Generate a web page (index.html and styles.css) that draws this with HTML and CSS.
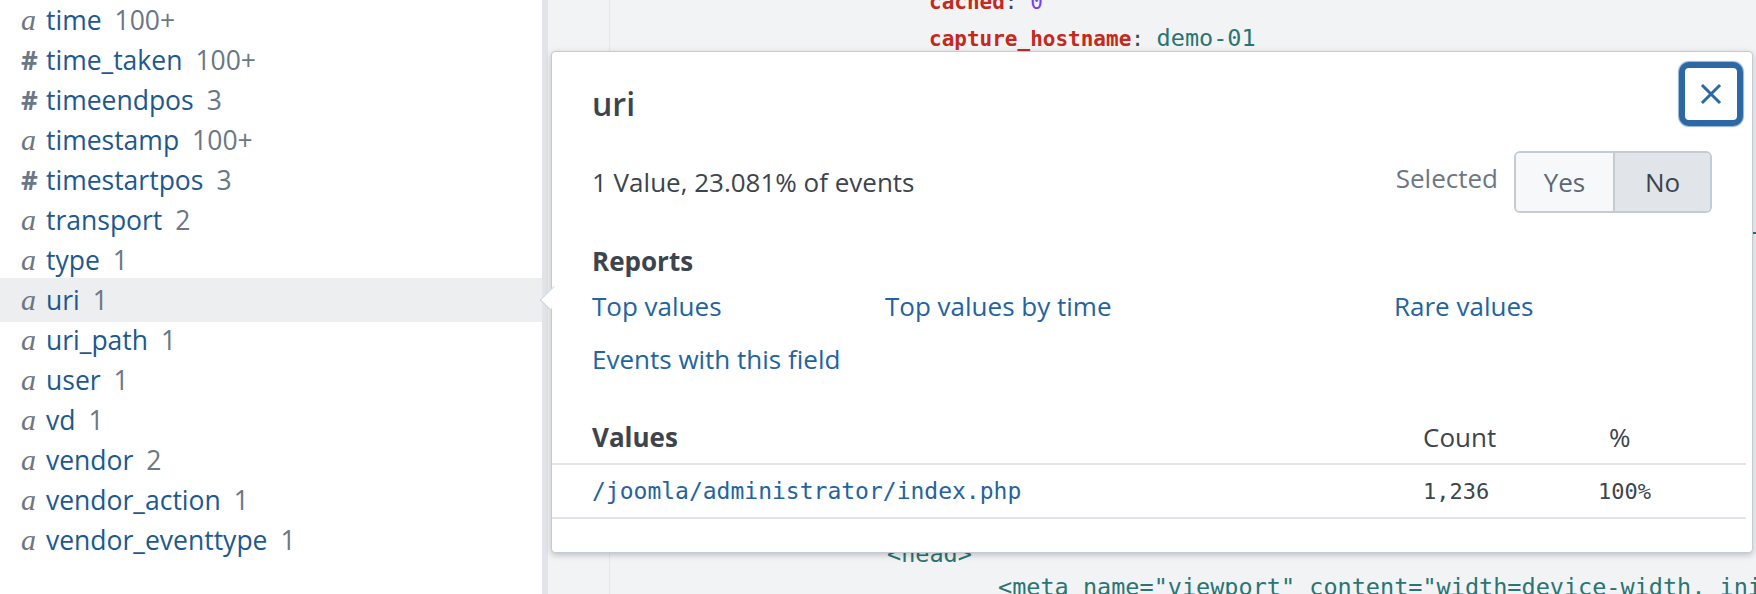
FILE: index.html
```html
<!DOCTYPE html>
<html>
<head>
<meta charset="utf-8">
<link rel="stylesheet" href="styles.css">
</head>
<body>
<div class="page">
  <aside class="fields">
    <div class="field"><span class="ic ic-a">a</span><span class="name">time</span><span class="cnt">100+</span></div>
    <div class="field"><span class="ic ic-n">#</span><span class="name">time_taken</span><span class="cnt">100+</span></div>
    <div class="field"><span class="ic ic-n">#</span><span class="name">timeendpos</span><span class="cnt">3</span></div>
    <div class="field"><span class="ic ic-a">a</span><span class="name">timestamp</span><span class="cnt">100+</span></div>
    <div class="field"><span class="ic ic-n">#</span><span class="name">timestartpos</span><span class="cnt">3</span></div>
    <div class="field"><span class="ic ic-a">a</span><span class="name">transport</span><span class="cnt">2</span></div>
    <div class="field"><span class="ic ic-a">a</span><span class="name">type</span><span class="cnt">1</span></div>
    <div class="field active"><span class="ic ic-a">a</span><span class="name">uri</span><span class="cnt">1</span></div>
    <div class="field"><span class="ic ic-a">a</span><span class="name">uri_path</span><span class="cnt">1</span></div>
    <div class="field"><span class="ic ic-a">a</span><span class="name">user</span><span class="cnt">1</span></div>
    <div class="field"><span class="ic ic-a">a</span><span class="name">vd</span><span class="cnt">1</span></div>
    <div class="field"><span class="ic ic-a">a</span><span class="name">vendor</span><span class="cnt">2</span></div>
    <div class="field"><span class="ic ic-a">a</span><span class="name">vendor_action</span><span class="cnt">1</span></div>
    <div class="field"><span class="ic ic-a">a</span><span class="name">vendor_eventtype</span><span class="cnt">1</span></div>
  </aside>
  <div class="divider"></div>
  <main class="events">
    <div class="gutter"></div>
    <div class="code">
      <div class="line ind1"><span class="k">cached</span><span class="p">: </span><span class="num">0</span></div>
      <div class="line ind1"><span class="k">capture_hostname</span><span class="p">: </span><span class="v">demo-01</span></div>
      <div class="hidden-lines">
        <div class="line ind1"><span class="k">dest_content</span><span class="p">: </span><span class="v">&lt;!DOCTYPE html PUBLIC "-//W3C//DTD XHTML 1.0 Transitional//EN"&gt;</span></div>
        <div class="line ind0"><span class="v">&lt;html&gt;</span></div>
      </div>
      <div class="line ind0 lower"><span class="v">&lt;head&gt;</span></div>
      <div class="line ind2 lower"><span class="v">&lt;meta name="viewport" content="width=device-width, initial-scale=1.0" /&gt;</span></div>
    </div>
  </main>

  <section class="popover">
    <div class="arrow"></div>
    <header class="pop-head">
      <h2 class="pop-title">uri</h2>
      <button class="close" aria-label="Close">
        <svg viewBox="0 0 24 24" width="24" height="24"><path d="M4 4 L20 20 M20 4 L4 20" stroke="#2b68a4" stroke-width="3" stroke-linecap="square" fill="none"/></svg>
      </button>
    </header>
    <div class="summary">
      <span class="stat">1 Value, 23.081% of events</span>
      <div class="selected">
        <span class="sel-label">Selected</span>
        <div class="toggle"><span class="opt">Yes</span><span class="opt on">No</span></div>
      </div>
    </div>
    <h3 class="sub">Reports</h3>
    <div class="reports">
      <a class="link">Top values</a>
      <a class="link">Top values by time</a>
      <a class="link">Rare values</a>
      <a class="link">Events with this field</a>
    </div>
    <div class="values">
      <div class="vrow vhead"><span class="c1">Values</span><span class="c2">Count</span><span class="c3 pct">%</span></div>
      <div class="vrow vbody"><span class="c1 mono link">/joomla/administrator/index.php</span><span class="c2 mono">1,236</span><span class="c3 mono">100%</span></div>
    </div>
  </section>
</div>
</body>
</html>
```
FILE: styles.css
```css
* { box-sizing: border-box; }
html, body { margin: 0; padding: 0; }
body {
  width: 1756px;
  height: 594px;
  overflow: hidden;
  font-family: "Open Sans", "Lato", sans-serif;
  color: #3c444d;
  background: #fff;
}
.page {
  position: relative;
  display: flex;
  width: 1756px;
  height: 594px;
  overflow: hidden;
}
.fields {
  width: 542px;
  flex: none;
  background: #fff;
}
.field {
  height: 40px;
  display: flex;
  align-items: center;
  padding-left: 21px;
  font-size: 26.5px;
  white-space: nowrap;
}
.field.active {
  background: #eceef0;
  height: 44px;
  margin: -2px 0;
}
.ic {
  width: 25px;
  flex: none;
  color: #6b7785;
}
.ic-a {
  font-family: "Liberation Serif", "DejaVu Serif", serif;
  font-style: italic;
  font-size: 30px;
}
.ic-n {
  font-size: 26px;
  font-weight: 700;
}
.name { color: #1d5890; }
.cnt { color: #6b7785; margin-left: 13px; }
.divider {
  width: 6px;
  flex: none;
  background: #e1e4e8;
}
.events {
  flex: 1;
  display: flex;
  background: #f2f3f5;
  overflow: hidden;
}
.gutter {
  width: 62px;
  flex: none;
  border-right: 1px solid #e3e6ea;
}
.code {
  flex: 1;
  font-family: "DejaVu Sans Mono", monospace;
  font-size: 21px;
  white-space: nowrap;
  margin-top: -16px;
  overflow: hidden;
}
.line { height: 36px; line-height: 36px; }
.lower { height: 33px; line-height: 33px; }
.ind0 { padding-left: 277px; }
.ind1 { padding-left: 319px; }
.ind2 { padding-left: 388px; }
.hidden-lines {
  height: 482px;
  padding-top: 167px;
}
.k { color: #c4291c; font-weight: 700; }
.p { color: #3c444d; }
.num { color: #7b3ff2; }
.v { color: #2a7574; font-size: 23.5px; }

.popover {
  position: absolute;
  left: 551px;
  top: 51px;
  width: 1202px;
  height: 502px;
  background: #fff;
  border: 1px solid #c3cbd4;
  border-radius: 4px;
  box-shadow: 0 2px 6px rgba(0, 0, 0, 0.22);
  padding: 0 0 0 40px;
}
.arrow {
  position: absolute;
  left: -10px;
  top: 236px;
  width: 20px;
  height: 20px;
  background: #fff;
  border-left: 1px solid #c3cbd4;
  border-bottom: 1px solid #c3cbd4;
  transform: rotate(45deg) scaleX(0.7);
}
.pop-head {
  display: flex;
  justify-content: space-between;
  align-items: flex-start;
  padding-right: 9px;
  padding-top: 10px;
  height: 98px;
}
.pop-title {
  margin: 20px 0 0 0;
  font-size: 32px;
  font-weight: 600;
  color: #3c444d;
  line-height: 44px;
}
.close {
  width: 64px;
  height: 64px;
  border: 6px solid #2b68a4;
  border-radius: 10px;
  background: #fff;
  display: flex;
  align-items: center;
  justify-content: center;
  padding: 0;
  box-shadow: 0 0 1px 1px rgba(43, 104, 164, 0.5);
}
.summary {
  display: flex;
  justify-content: space-between;
  align-items: center;
  padding-right: 40px;
  height: 64px;
  font-size: 26px;
}
.selected { display: flex; align-items: center; gap: 16px; }
.sel-label { color: #6b7785; margin-top: -8px; }
.toggle {
  display: flex;
  border: 2px solid #c3cbd4;
  border-radius: 6px;
  overflow: hidden;
  height: 62px;
}
.opt {
  width: 97px;
  display: flex;
  align-items: center;
  justify-content: center;
  background: #f7f8fa;
  color: #5c6773;
}
.opt.on {
  background: #e1e4e8;
  color: #3c444d;
  border-left: 2px solid #c3cbd4;
}
.sub {
  margin: 0;
  padding-top: 29px;
  font-size: 26px;
  font-weight: 700;
  line-height: 36px;
}
.reports {
  display: grid;
  grid-template-columns: 293px 509px auto;
  grid-auto-rows: 53px;
  align-items: center;
  font-size: 26px;
}
.link { color: #23639f; }
.values {
  margin-top: 26px;
  margin-left: -40px;
  margin-right: 6px;
}
.vrow {
  display: grid;
  grid-template-columns: 831px 175px auto;
  align-items: center;
  padding-left: 40px;
  border-bottom: 2px solid #e1e4e8;
}
.vhead {
  height: 54px;
  font-size: 26px;
}
.vhead .c1 { font-weight: 700; }
.vhead .pct { padding-left: 11px; }
.vbody {
  height: 54px;
  font-size: 22px;
}
.mono { font-family: "DejaVu Sans Mono", monospace; }
.vbody .c1 { font-size: 23px; }
.vbody .c2, .vbody .c3 { color: #3c444d; }
```
